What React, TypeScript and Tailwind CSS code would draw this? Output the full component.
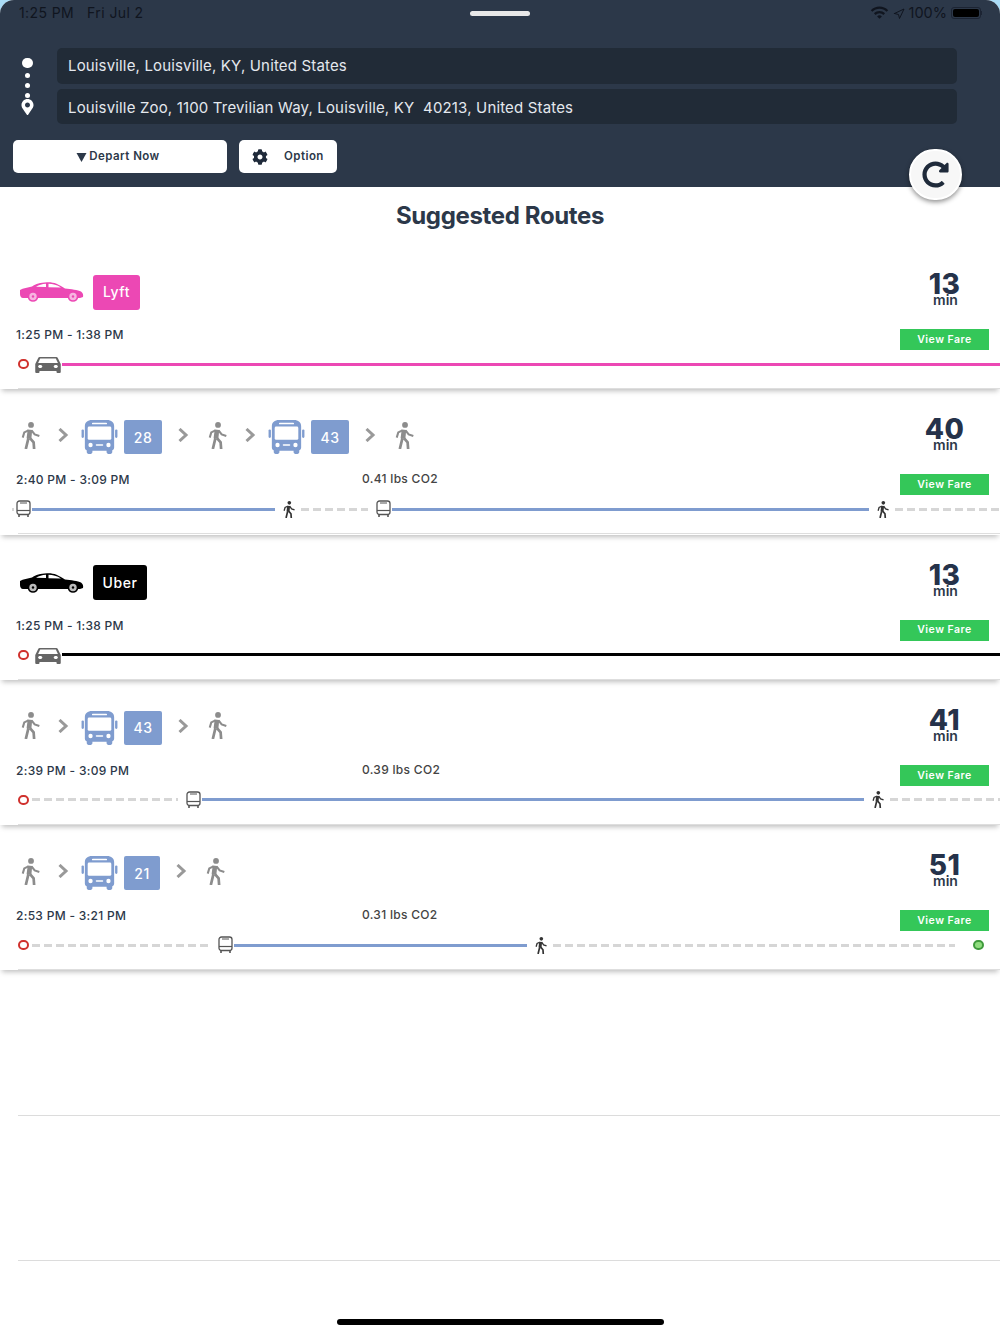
import React from 'react';
import { FaCog, FaMapMarkerAlt, FaRedoAlt } from 'react-icons/fa';
import { MdDirectionsCar, MdWifi } from 'react-icons/md';
import { Navigation } from 'lucide-react';

type Segment =
  | { kind: 'start' | 'end' | 'car' | 'walk' }
  | { kind: 'bus'; tight?: boolean }
  | { kind: 'line' | 'dash'; width: string; color?: string };

type Route = {
  mode: 'car' | 'transit';
  time: string;
  minutes: string;
  co2?: string;
  steps: string[];
  timeline: Segment[];
};

const routes: Route[] = [
  {
    mode: 'car',
    time: '1:25 PM - 1:38 PM',
    minutes: '13',
    steps: ['Lyft'],
    timeline: [{ kind: 'start' }, { kind: 'car' }, { kind: 'line', width: 'flex-1', color: 'bg-[#ec48b4]' }],
  },
  {
    mode: 'transit',
    time: '2:40 PM - 3:09 PM',
    minutes: '40',
    co2: '0.41 lbs CO2',
    steps: ['walk', '28', 'walk', '43', 'walk'],
    timeline: [
      { kind: 'dash', width: 'w-[2px]' },
      { kind: 'bus', tight: true },
      { kind: 'line', width: 'w-[243px]' },
      { kind: 'walk' },
      { kind: 'dash', width: 'w-[67px]' },
      { kind: 'bus' },
      { kind: 'line', width: 'w-[477px]' },
      { kind: 'walk' },
      { kind: 'dash', width: 'flex-1' },
    ],
  },
  {
    mode: 'car',
    time: '1:25 PM - 1:38 PM',
    minutes: '13',
    steps: ['Uber'],
    timeline: [{ kind: 'start' }, { kind: 'car' }, { kind: 'line', width: 'flex-1', color: 'bg-black' }],
  },
  {
    mode: 'transit',
    time: '2:39 PM - 3:09 PM',
    minutes: '41',
    co2: '0.39 lbs CO2',
    steps: ['walk', '43', 'walk'],
    timeline: [
      { kind: 'start' },
      { kind: 'dash', width: 'w-[146px]' },
      { kind: 'bus' },
      { kind: 'line', width: 'w-[662px]' },
      { kind: 'walk' },
      { kind: 'dash', width: 'flex-1' },
    ],
  },
  {
    mode: 'transit',
    time: '2:53 PM - 3:21 PM',
    minutes: '51',
    co2: '0.31 lbs CO2',
    steps: ['walk', '21', 'walk'],
    timeline: [
      { kind: 'start' },
      { kind: 'dash', width: 'w-[178px]' },
      { kind: 'bus' },
      { kind: 'line', width: 'w-[293px]' },
      { kind: 'walk' },
      { kind: 'dash', width: 'w-[402px]' },
      { kind: 'end' },
    ],
  },
];

const BusIcon = ({ className }: { className: string }) => (
  <svg viewBox="0 0 38 36" className={className} fill="currentColor">
    <rect x="0" y="10" width="2.5" height="9" rx="1.2" />
    <rect x="35.5" y="10" width="2.5" height="9" rx="1.2" />
    <path d="M11 0h16c4.500 0 7.500 2.500 7.500 6.500V29c0 1.500-.8 2.600-2 3v2c0 1.200-.8 2-2 2h-2c-1.200 0-2-.8-2-2v-1.500H11.500V34c0 1.200-.8 2-2 2h-2c-1.200 0-2-.8-2-2v-2c-1.200-.4-2-1.500-2-3V6.500C3.500 2.500 6.500 0 11 0z" />
    <rect x="6.500" y="7" width="25" height="14" rx="1.500" fill="#fff" />
    <rect x="11" y="2.800" width="16" height="1.800" rx="0.900" fill="#fff" />
    <circle cx="9.500" cy="26.500" r="2.300" fill="#fff" />
    <circle cx="28.500" cy="26.500" r="2.300" fill="#fff" />
    <rect x="15" y="25.700" width="8" height="1.600" rx="0.800" fill="#fff" />
  </svg>
);

const SmallBus = () => (
  <svg viewBox="0 0 15 18" className="w-[15px] h-[18px] shrink-0 text-[#555]" fill="none" stroke="currentColor">
    <rect x="1" y="1" width="13" height="13.500" rx="2.500" strokeWidth="1.300" />
    <path d="M1 10.500h13" strokeWidth="1.200" />
    <path d="M3 15v2M12 15v2" strokeWidth="1.600" />
    <path d="M4 3h7" strokeWidth="1" />
  </svg>
);

const Walker = ({ className }: { className: string }) => (
  <svg viewBox="0 0 18 26" className={className} fill="none" stroke="currentColor">
    <circle cx="9.500" cy="2.800" r="2.800" fill="currentColor" stroke="none" />
    <path d="M8.500 7.500 7.500 16" strokeWidth="4.500" />
    <path d="M7 15.500 4.500 26M8.500 15.500 12 19.500 12.500 26" strokeWidth="2.600" />
    <path d="M10 8 13 12 17.500 13.500M7 8 3 10 1.500 15" strokeWidth="2" />
  </svg>
);

const Chevron = () => (
  <svg viewBox="0 0 11 14" className="w-[11px] h-[14px] shrink-0 text-[#999]" fill="none" stroke="currentColor">
    <path d="M1.500 1 8 7 1.500 13" strokeWidth="3" />
  </svg>
);

const SideCar = ({ body, wheel }: { body: string; wheel: string }) => (
  <svg viewBox="0 0 64 20" className={`w-[64px] h-[20px] ${body}`} fill="currentColor">
    <path d="M0 8C3 6 8 5.500 12 4.500 16 2 20 .5 27 .3c7-.3 11 1.700 18 6.200 6 .5 13 1.500 16 3 2 1.500 2.500 3.500 2 5.500l-3 1H3c-2 0-3-2-3-4z" />
    <path d="M16 4.800C19 3 22 2 26 1.800L26 5zM28.500 1.800C33 1.800 37 3 41 5.500L28.500 5.300z" fill="#fff" />
    <circle cx="13" cy="14.500" r="5.300" />
    <circle cx="13" cy="14.500" r="3.700" fill={wheel} />
    <circle cx="13" cy="14.500" r="1.200" />
    <circle cx="53" cy="14.500" r="5.300" />
    <circle cx="53" cy="14.500" r="3.700" fill={wheel} />
    <circle cx="53" cy="14.500" r="1.200" />
  </svg>
);

const Ring = ({ color }: { color: string }) => (
  <span className={`block w-[11px] h-[10px] rounded-full border-2 shrink-0 ${color}`} />
);

const StepIcons = ({ steps }: { steps: string[] }) => (
  <div className="flex items-center gap-[12px] pl-[14px] h-[36px]">
    {steps.map((step, i) => (
      <React.Fragment key={i}>
        {i > 0 && (
          <div className="-mt-[4px]">
            <Chevron />
          </div>
        )}
        {step === 'walk' ? (
          <div className="w-[32px] flex justify-center -mt-[4px]">
            <Walker className="w-[19px] h-[27px] text-[#8c8c8c]" />
          </div>
        ) : (
          <div className={`flex items-center gap-[6px] ${i < steps.length - 1 ? 'mr-[4px]' : ''}`}>
            <BusIcon className="w-[37px] h-[34px] text-[#7f9ccf]" />
            <div
              className={`h-[34px] rounded-[2px] bg-[#7f9ccf] text-white text-[14px] font-medium tracking-[0.5px] flex items-center justify-center ${
                step === '21' ? 'w-[36px]' : 'w-[38px]'
              }`}
            >
              {step}
            </div>
          </div>
        )}
      </React.Fragment>
    ))}
  </div>
);

const CarBrand = ({ name }: { name: string }) => {
  const lyft = name === 'Lyft';
  return (
    <div className="flex items-center gap-[9px] pl-[20px] h-[36px]">
      <SideCar body={lyft ? 'text-[#ec48b4]' : 'text-black'} wheel={lyft ? '#f7b5e0' : '#bbb'} />
      <div
        className={`h-[35px] flex items-center justify-center rounded-[3px] text-white text-[14px] font-medium tracking-[0.6px] ${
          lyft ? 'w-[47px] pb-[2px] bg-[#ec48b4]' : 'w-[54px] pb-[1px] bg-black'
        }`}
      >
        {name}
      </div>
    </div>
  );
};

const Timeline = ({ segments }: { segments: Segment[] }) => (
  <div className="flex items-center h-[20px] pl-[12px]">
    {segments.map((s, i) => {
      switch (s.kind) {
        case 'start':
          return (
            <div key={i} className="w-[20px] pl-[6px] shrink-0">
              <Ring color="border-[#d0312d]" />
            </div>
          );
        case 'end':
          return (
            <div key={i} className="ml-[18px]">
              <Ring color="border-[#3f9a3c] bg-[#8fdc7e]" />
            </div>
          );
        case 'car':
          return (
            <MdDirectionsCar
              key={i}
              preserveAspectRatio="none"
              className="w-[34px] h-[24px] -ml-[1px] -mr-[3px] text-[#666] shrink-0"
            />
          );
        case 'bus':
          return (
            <div key={i} className={`mr-[1px] shrink-0 ${s.tight ? 'ml-[2px]' : 'ml-[8px]'}`}>
              <SmallBus />
            </div>
          );
        case 'walk':
          return (
            <div key={i} className="w-[26px] pl-[8px] shrink-0">
              <Walker className="w-[12px] h-[17px] text-[#333]" />
            </div>
          );
        case 'line':
          return <div key={i} className={`h-[3px] shrink-0 ${s.width} ${s.color ?? 'bg-[#7f9ccf]'}`} />;
        case 'dash':
          return (
            <div
              key={i}
              className={`h-[3px] shrink-0 bg-[repeating-linear-gradient(90deg,#d6d6d6_0_8px,transparent_8px_12px)] ${s.width}`}
            />
          );
      }
    })}
  </div>
);

const RouteCard = ({ route }: { route: Route }) => (
  <div className="h-[145.3px] shadow-[0_4px_5px_-2px_rgba(0,0,0,0.25)]">
    <div className="flex justify-between h-[110px]">
      <div className="pt-[30px] flex-1">
        {route.mode === 'car' ? <CarBrand name={route.steps[0]} /> : <StepIcons steps={route.steps} />}
        <div className="flex mt-[17px] pl-[16px] text-[#2c3849] text-[12px] font-medium tracking-[0.3px] leading-[16px]">
          <span className="w-[346px]">{route.time}</span>
          {route.co2 && <span className="text-[#444] -mt-[1px]">{route.co2}</span>}
        </div>
      </div>
      <div className="w-[89px] mr-[11px] pt-[29px] flex flex-col items-center">
        <div className="text-[28px] leading-[22px] font-extrabold tracking-[0.5px] text-[#25324a]">{route.minutes}</div>
        <div className="text-[14px] leading-[12px] -mt-[1px] ml-[2px] font-semibold text-[#2c3849]">min</div>
        <div className="mt-[23px] w-full h-[21px] bg-[#34c759] text-white text-[10.5px] font-semibold tracking-[0.5px] flex items-center justify-center">
          View Fare
        </div>
      </div>
    </div>
    <Timeline segments={route.timeline} />
    <div className="mt-[14px] ml-[18px] h-[1px] bg-[#dedede]" />
  </div>
);

export default function App() {
  return (
    <div className="w-[1000px] h-[1334px] overflow-hidden bg-[#a9dcf6] font-['Inter','Liberation_Sans',sans-serif]">
      <div className="h-full rounded-t-[14px] overflow-hidden bg-white relative">
        {/* header */}
        <div className="h-[187px] bg-[#2c3849] relative">
          <div className="h-[48px] pl-[19px] pr-[18px] pt-[5px] flex text-[14px] leading-[16px] text-[#10151f]">
            <div className="flex-1 flex gap-[13px] tracking-[0.4px]">
              <span>1:25 PM</span>
              <span>Fri Jul 2</span>
            </div>
            <div className="w-[60px] h-[5px] mt-[6px] -ml-[1px] rounded-full bg-[#e8e8e8]" />
            <div className="flex-1 flex justify-end items-start gap-[4px]">
              <MdWifi className="w-[19px] h-[19px] -mt-[2px]" />
              <Navigation className="w-[12px] h-[12px] mt-[3px]" strokeWidth={2} />
              <span className="text-[14.5px]">100%</span>
              <div className="flex items-center mt-[2px]">
                <div className="w-[30px] h-[12px] rounded-[3px] border border-[#1c2433] p-[1px]">
                  <div className="w-full h-full rounded-[2px] bg-black" />
                </div>
                <div className="w-[1px] h-[4px] bg-[#1c2433]" />
              </div>
            </div>
          </div>
          <div className="flex">
            <div className="w-[57px] flex flex-col items-center pt-[10px]">
              <div className="w-[11px] h-[10px] rounded-full bg-white ml-[-2px]" />
              <div className="w-[5px] h-[5px] rounded-full bg-white ml-[-2px] mt-[5px]" />
              <div className="w-[5px] h-[5px] rounded-full bg-white ml-[-2px] mt-[5px]" />
              <div className="w-[5px] h-[5px] rounded-full bg-white ml-[-2px] mt-[5px]" />
              <FaMapMarkerAlt className="w-[13px] h-[16px] text-white ml-[-2px] mt-[1px]" />
            </div>
            <div className="w-[900px] flex flex-col gap-[5px] text-[15px] tracking-[0.16px] text-[#e4e8ee]">
              <div className="h-[36px] rounded-[5px] bg-[#212b37] flex items-center px-[11px] pt-[1px]">
                Louisville, Louisville, KY, United States
              </div>
              <div className="h-[35px] rounded-[5px] bg-[#212b37] flex items-center px-[11px] pt-[3px] whitespace-pre">
                Louisville Zoo, 1100 Trevilian Way, Louisville, KY  40213, United States
              </div>
            </div>
          </div>
          <div className="flex gap-[12px] pl-[13px] mt-[16px] text-[11.5px] font-semibold tracking-[0.45px] text-[#2c3849]">
            <div className="w-[214px] h-[33px] bg-white rounded-[5px] flex items-center justify-center gap-[2px] pr-[4px]">
              <svg viewBox="0 0 10 10" className="w-[11px] h-[10px]" fill="currentColor">
                <path d="M0 1h10L5 10z" />
              </svg>
              Depart Now
            </div>
            <div className="w-[98px] h-[33px] bg-white rounded-[5px] flex items-center pl-[13px] gap-[16px]">
              <FaCog className="w-[16px] h-[16px] text-[#1f2a3a]" />
              Option
            </div>
          </div>
          <div className="absolute left-[909px] top-[149px] w-[53px] h-[51px] rounded-full bg-[#f7f7f7] border-2 border-white shadow-[0_2px_5px_rgba(0,0,0,0.45)] flex items-center justify-center z-10">
            <FaRedoAlt className="w-[27px] h-[27px] text-[#1f2a3a]" />
          </div>
        </div>

        <h1 className="h-[57px] flex items-center justify-center text-[24px] font-bold text-[#2c3849] tracking-[-0.35px]">
          Suggested Routes
        </h1>

        {routes.map((route, i) => (
          <RouteCard key={i} route={route} />
        ))}

        <div className="ml-[18px] h-[145.500px] border-b border-[#dcdcdc]" />
        <div className="ml-[18px] h-[145.500px] border-b border-[#dcdcdc]" />

        <div className="mt-[58px] mx-auto w-[327px] h-[6px] rounded-full bg-black" />
      </div>
    </div>
  );
}
